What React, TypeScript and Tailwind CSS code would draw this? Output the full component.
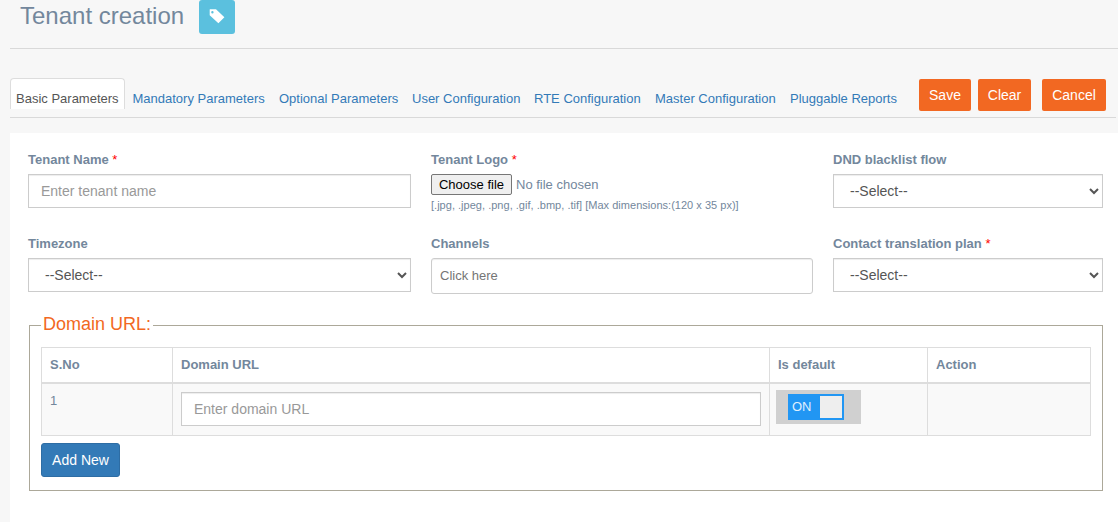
import React from "react";

const tabs: { label: string; style: string }[] = [
  { label: "Mandatory Parameters", style: "ml-[7.5px] w-[132.5px]" },
  { label: "Optional Parameters", style: "ml-[14px] w-[119px]" },
  { label: "User Configuration", style: "ml-[14px] w-[108px]" },
  { label: "RTE Configuration", style: "ml-[14px] w-[107px]" },
  { label: "Master Configuration", style: "ml-[14px] w-[120px]" },
  { label: "Pluggable Reports", style: "ml-[15px] w-[107px]" },
];

const control =
  "block h-[34px] w-full border border-[#ccc] bg-white px-3 py-[6px] text-sm leading-[20px] text-[#555] shadow-[inset_0_1px_1px_rgba(0,0,0,0.075)] outline-none placeholder:text-[#999]";

function Label({ text, required }: { text: string; required?: boolean }) {
  return (
    <label className="mb-[5px] block h-[18px] whitespace-nowrap text-[13px] leading-[18px] font-bold">
      {text}
      {required && <span className="font-normal text-[#f00]"> *</span>}
    </label>
  );
}

function Select() {
  return (
    <select className={control}>
      <option>--Select--</option>
    </select>
  );
}

function ActionButton({ label, style }: { label: string; style: string }) {
  return (
    <button className={`h-8 rounded-[2px] bg-[#f26822] text-sm whitespace-nowrap text-white ${style}`}>
      {label}
    </button>
  );
}

export default function App() {
  return (
    <div className="flex h-[522px] w-[1118px] flex-col overflow-hidden bg-[#f7f7f7] pl-[10px] font-['Liberation_Sans',Arial,sans-serif] text-[13px] text-[#73879c]">
      <header className="flex h-[49px] shrink-0 items-start border-b border-[#d9d9d9] pl-[10px]">
        <h1 className="w-[179px] text-2xl leading-[31px] font-medium whitespace-nowrap">
          Tenant creation
        </h1>
        <button className="flex h-[34px] w-9 items-center justify-center rounded-[3px] bg-[#5bc0de] pb-px text-white">
          <svg width="16" height="15" viewBox="0 0 16 15" fill="currentColor">
            <path
              fillRule="evenodd"
              d="M1 .3H7L15.4 8.2 9.4 14.3 .7 6.2V.6ZM3.4 2.1A1.2 1.2 0 1 0 3.4 4.5 1.2 1.2 0 1 0 3.4 2.1Z"
            />
          </svg>
        </button>
      </header>

      <nav className="mr-[2px] flex h-[69px] shrink-0 items-start border-b border-[#d9d9d9] pt-[29px]">
        <a className="h-[31px] w-[115px] rounded-t-[4px] border border-b-0 border-[#ddd] bg-white pt-[11px] pl-[5px] leading-[18px] whitespace-nowrap text-[#555]">
          Basic Parameters
        </a>
        {tabs.map((tab) => (
          <a key={tab.label} className={`pt-3 leading-[18px] whitespace-nowrap text-[#337ab7] ${tab.style}`}>
            {tab.label}
          </a>
        ))}
        <div className="mt-px ml-[22px] flex">
          <ActionButton label="Save" style="w-[52px]" />
          <ActionButton label="Clear" style="ml-[7px] w-[53px]" />
          <ActionButton label="Cancel" style="ml-[11px] w-[64px]" />
        </div>
      </nav>

      <main className="mt-[15px] flex-1 bg-white pt-[18px] pr-[15px] pl-[18px]">
        <div className="grid grid-cols-[383px_382px_270px] gap-x-5">
          <div className="h-[84px]">
            <Label text="Tenant Name" required />
            <input className={control} placeholder="Enter tenant name" />
          </div>
          <div className="h-[84px]">
            <Label text="Tenant Logo" required />
            <div className="flex h-[21px] items-center">
              <button className="h-[21px] w-[81px] rounded-[2px] border border-[#767676] bg-[#efefef] leading-[18px] whitespace-nowrap text-black">
                Choose file
              </button>
              <span className="ml-1">No file chosen</span>
            </div>
            <div className="mt-[3px] text-[11px] leading-[15px] tracking-[0.02px] whitespace-nowrap">
              [.jpg, .jpeg, .png, .gif, .bmp, .tif] [Max dimensions:(120 x 35 px)]
            </div>
          </div>
          <div className="h-[84px]">
            <Label text="DND blacklist flow" />
            <Select />
          </div>
          <div>
            <Label text="Timezone" />
            <Select />
          </div>
          <div>
            <Label text="Channels" />
            <input
              className="block h-9 w-full rounded-[3px] border border-[#ccc] px-2 pb-[2px] text-[13px] shadow-[inset_0_1px_1px_rgba(0,0,0,0.075)] outline-none placeholder:text-[#757575]"
              placeholder="Click here"
            />
          </div>
          <div>
            <Label text="Contact translation plan" required />
            <Select />
          </div>
        </div>

        <fieldset className="mt-[19px] ml-px h-[178px] w-[1073px] border border-[#aca899] px-[11px]">
          <legend className="h-[24px] w-[112px] px-[2px] text-lg leading-[22px] whitespace-nowrap text-[#f26822]">
            Domain URL:
          </legend>
          <table className="mt-[10px] w-[1050px] table-fixed border-collapse border border-[#ddd] text-left">
            <colgroup>
              <col className="w-[131px]" />
              <col className="w-[597px]" />
              <col className="w-[158px]" />
              <col className="w-[163px]" />
            </colgroup>
            <thead>
              <tr className="h-[35px]">
                <th className="border border-b-2 border-[#ddd] px-2 py-0">S.No</th>
                <th className="border border-b-2 border-[#ddd] px-2 py-0">Domain URL</th>
                <th className="border border-b-2 border-[#ddd] px-2 py-0">Is default</th>
                <th className="border border-b-2 border-[#ddd] px-2 py-0">Action</th>
              </tr>
            </thead>
            <tbody>
              <tr className="h-[53px] bg-[#f9f9f9] align-top">
                <td className="border border-[#ddd] px-2 pt-2 leading-[18px]">1</td>
                <td className="border border-[#ddd] px-2 pt-2">
                  <input className={control} placeholder="Enter domain URL" />
                </td>
                <td className="border border-[#ddd] px-[6px] pt-[6px]">
                  <div className="h-[34px] w-[85px] bg-[#d0d0d0] pt-1 pl-3">
                    <div className="flex h-[26px] w-14 items-center justify-between bg-[#2196f3] pr-[2px] pl-1">
                      <span className="text-[13px] text-[#e0f0fd]">ON</span>
                      <span className="h-[22px] w-[22px] bg-[#eee]" />
                    </div>
                  </div>
                </td>
                <td className="border border-[#ddd]" />
              </tr>
            </tbody>
          </table>
          <button className="mt-[7px] block h-[34px] w-[79px] rounded-[3px] border border-[#2e6da4] bg-[#337ab7] text-sm whitespace-nowrap text-white">
            Add New
          </button>
        </fieldset>
      </main>
    </div>
  );
}
